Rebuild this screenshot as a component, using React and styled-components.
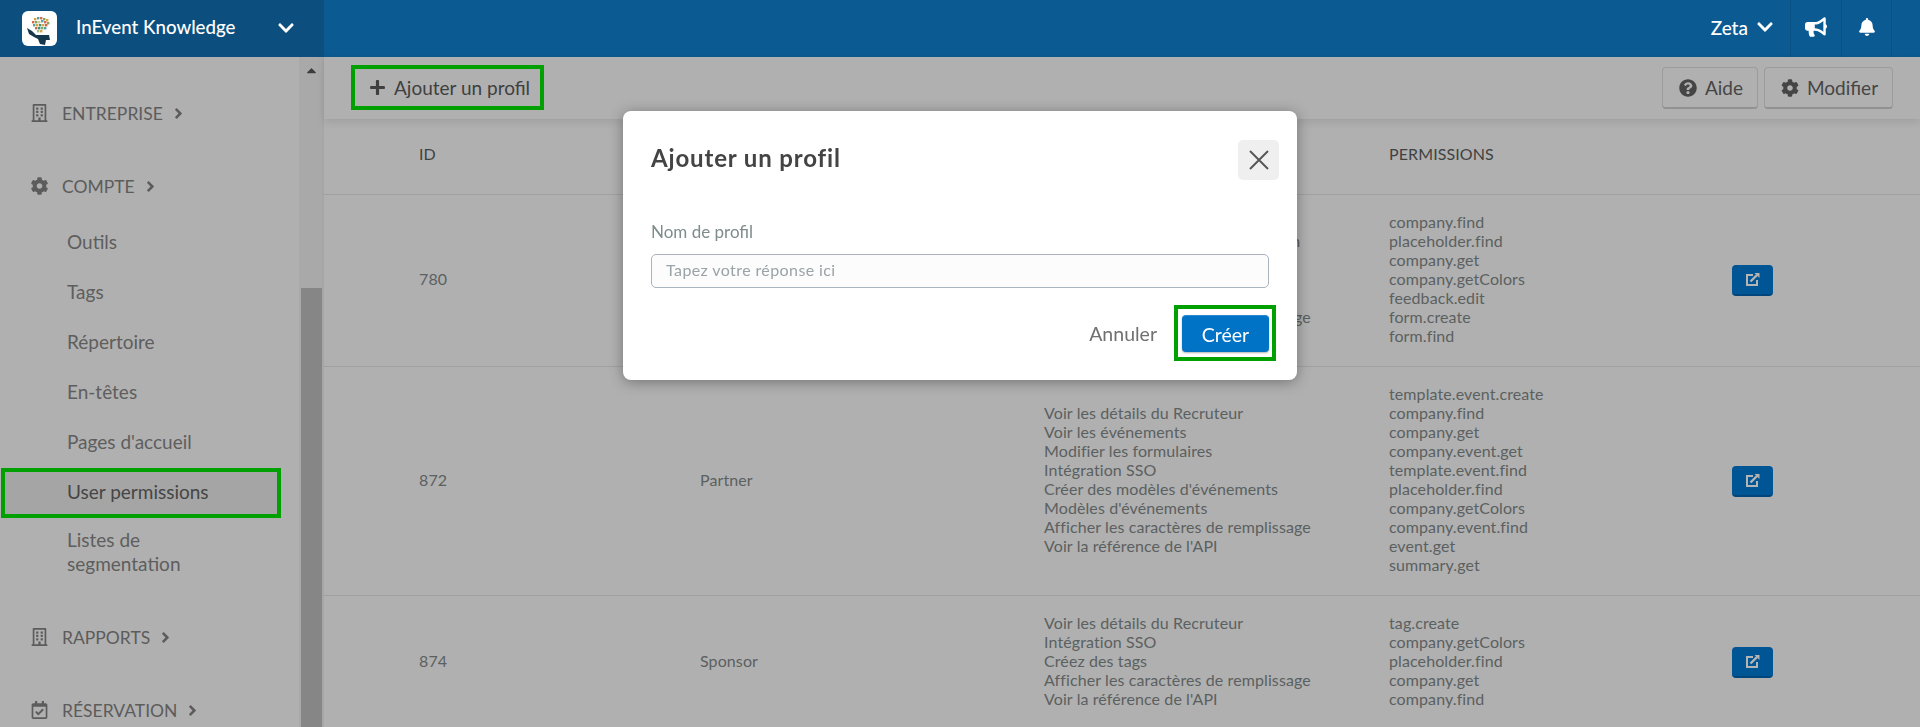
import React from 'react';
import styled, { createGlobalStyle } from 'styled-components';
import {
    FaRegBuilding,
    FaCog,
    FaRegCalendarCheck,
    FaPlus,
    FaQuestionCircle,
    FaBullhorn,
    FaBell,
    FaChevronDown,
    FaAngleRight,
    FaCaretUp,
} from 'react-icons/fa';

const GlobalStyle = createGlobalStyle`
    html, body {
        margin: 0;
        height: 100%;
        overflow: hidden;
        background: #b0b0b0;
    }
    * { box-sizing: border-box; }
    body { font-family: Lato, "Liberation Sans", sans-serif; }
`;

const rows = [
    {
        id: '780',
        name: '',
        labels: [
            "Voir les détails du Recruteur",
            "Voir les paramètres de l'organisation",
            "Intégration SSO",
            "Créez des tags",
            "Voir les événements",
            "Afficher les caractères de remplissage",
            "Voir la référence de l'API",
        ],
        permissions: ['company.find', 'placeholder.find', 'company.get', 'company.getColors', 'feedback.edit', 'form.create', 'form.find'],
    },
    {
        id: '872',
        name: 'Partner',
        labels: [
            "Voir les détails du Recruteur",
            "Voir les événements",
            "Modifier les formulaires",
            "Intégration SSO",
            "Créer des modèles d'événements",
            "Modèles d'événements",
            "Afficher les caractères de remplissage",
            "Voir la référence de l'API",
        ],
        permissions: ['template.event.create', 'company.find', 'company.get', 'company.event.get', 'template.event.find', 'placeholder.find', 'company.getColors', 'company.event.find', 'event.get', 'summary.get'],
    },
    {
        id: '874',
        name: 'Sponsor',
        labels: [
            "Voir les détails du Recruteur",
            "Intégration SSO",
            "Créez des tags",
            "Afficher les caractères de remplissage",
            "Voir la référence de l'API",
        ],
        permissions: ['tag.create', 'company.getColors', 'placeholder.find', 'company.get', 'company.find'],
    },
];

const compteItems = ['Outils', 'Tags', 'Répertoire', 'En-têtes', "Pages d'accueil", 'User permissions'];

const logoDots = [
    [12, 7, '#d9a441'], [15, 6, '#4fa3a5'], [18, 6, '#d9694a'], [21, 7, '#7aa95c'], [24, 8, '#d9a441'],
    [10, 10, '#d9694a'], [13, 10, '#7aa95c'], [16, 10, '#c9c9a0'], [19, 9, '#4fa3a5'], [22, 10, '#d9694a'], [25, 11, '#7aa95c'],
    [11, 13, '#4fa3a5'], [14, 13, '#d9a441'], [17, 13, '#3f8f7f'], [20, 13, '#d9a441'], [23, 13, '#c9694a'],
    [13, 16, '#c9694a'], [16, 16, '#3f8f7f'], [19, 16, '#7aa95c'], [22, 16, '#4fa3a5'],
    [15, 19, '#9bbf8a'], [18, 19, '#d9a441'],
];

const Page = styled.div`
    width: 1920px;
    height: 727px;
    display: flex;
    flex-direction: column;
    overflow: hidden;
`;

const Header = styled.header`
    flex: 0 0 57px;
    display: flex;
    background: #0c5a92;
    color: #fff;
`;

const Brand = styled.div`
    width: 324px;
    background: #0c4f7f;
    display: flex;
    align-items: center;
    padding-left: 22px;
`;

const Logo = styled.svg`
    width: 35px;
    height: 35px;
    flex: none;
`;

const BrandName = styled.span`
    margin: 0 0 3px 19px;
    font-size: 18.7px;
    font-weight: 500;
    width: 201px;
`;

const BrandChevron = styled(FaChevronDown)`
    margin-bottom: 2px;
`;

const HeaderRight = styled.div`
    margin-left: auto;
    display: flex;
    align-items: stretch;
    margin-right: 28px;
`;

const UserMenu = styled.div`
    display: flex;
    align-items: center;
    gap: 8px;
    font-size: 19px;
    font-weight: 500;
    padding: 0 16px 3px 0;
`;

const HeaderIcon = styled.div`
    width: 51px;
    padding-bottom: 3px;
    display: flex;
    align-items: center;
    justify-content: center;
    font-size: 20px;
    border-left: 1px solid #0b5184;
    &:last-child { border-right: 1px solid #0b5184; }
`;

const Body = styled.div`
    flex: 1;
    display: flex;
    min-height: 0;
`;

const Sidebar = styled.aside`
    width: 324px;
    flex: none;
    display: flex;
    background: #b0b0b0;
    border-right: 2px solid #a6a6a6;
`;

const Nav = styled.nav`
    width: 300px;
    padding: 41px 0 0 1px;
    flex: none;
`;

const NavHead = styled.div`
    height: 30px;
    margin: 0 0 43px 27px;
    display: flex;
    align-items: center;
    color: #5c5c5c;
    font-size: 17.5px;
    & > svg:first-child {
        font-size: 18px;
        width: 23px;
        margin-right: 11px;
        flex: none;
    }
`;

const NavArrow = styled(FaAngleRight)`
    margin-left: 7px;
    font-size: 17px;
`;

const NavList = styled.div`
    margin: -26px 0 34px;
`;

const NavItem = styled.div`
    width: 280px;
    height: ${(p) => (p.$tall ? '70px' : '50px')};
    padding: 0 0 3px 62px;
    display: flex;
    align-items: center;
    line-height: 24px;
    font-size: 19px;
    color: ${(p) => (p.$active ? '#454545' : '#5e5e5e')};
    background: ${(p) => (p.$active ? '#a5a5a5' : 'transparent')};
    border: 4px solid ${(p) => (p.$active ? '#00a000' : 'transparent')};
`;

const ScrollTrack = styled.div`
    width: 23px;
    margin-left: -1px;
    padding-left: 2px;
    background: #a9a9a9;
    display: flex;
    flex-direction: column;
    align-items: center;
`;

const ScrollArrow = styled(FaCaretUp)`
    color: #3c3c3c;
    font-size: 15px;
    margin-top: 6px;
`;

const ScrollThumb = styled.div`
    width: 100%;
    margin-top: auto;
    height: 439px;
    background: #868686;
`;

const Main = styled.main`
    flex: 1;
    min-width: 0;
    display: flex;
    flex-direction: column;
`;

const Toolbar = styled.div`
    flex: 0 0 62px;
    display: flex;
    align-items: flex-start;
    padding: 8px 27px 0 27px;
    background: #b0b0b0;
    box-shadow: 0 3px 8px rgba(0, 0, 0, 0.1);
    position: relative;
`;

const AddProfile = styled.div`
    width: 193px;
    height: 45px;
    display: flex;
    align-items: center;
    gap: 8px;
    padding-left: 14px;
    border: 4px solid #00a000;
    font-size: 19px;
    color: #3f3f3f;
`;

const ToolbarActions = styled.div`
    margin-left: auto;
    display: flex;
    gap: 6px;
    margin-top: 2px;
`;

const ToolButton = styled.div`
    height: 42px;
    width: ${(p) => p.$width}px;
    padding-left: 2px;
    display: flex;
    align-items: center;
    justify-content: center;
    gap: 8px;
    font-size: 19px;
    color: #454545;
    background: #b0b0b0;
    border: 1px solid #9b9b9b;
    border-bottom: 2px solid #919191;
    border-radius: 4px;
`;

const TableRow = styled.div`
    display: grid;
    grid-template-columns: 281px 344px 345px 343px 1fr;
    padding: 0 0 4px 95px;
    align-items: center;
    height: ${(p) => p.$height}px;
    flex: none;
    font-size: 16px;
    letter-spacing: 0.1px;
    color: #5b6060;
    border-bottom: 1px solid #a0a0a0;
`;

const HeadRow = styled(TableRow)`
    color: #3f4242;
    padding-bottom: 6px;
`;

const Lines = styled.div`
    line-height: 19px;
`;

const EditButton = styled.div`
    width: 41px;
    height: 31px;
    margin-top: 4px;
    background: #005595;
    border-radius: 4px;
    border-bottom: 2px solid #00467c;
    display: flex;
    align-items: center;
    justify-content: center;
`;

const Backdrop = styled.div`
    position: fixed;
    inset: 0;
    padding-top: 111px;
    display: flex;
    justify-content: center;
    align-items: flex-start;
`;

const Modal = styled.div`
    width: 674px;
    height: 269px;
    background: #fff;
    border-radius: 8px;
    padding: 29px 18px 0 28px;
    box-shadow: 0 2px 14px rgba(0, 0, 0, 0.35);
`;

const ModalHead = styled.div`
    display: flex;
    justify-content: space-between;
    align-items: flex-start;
`;

const ModalTitle = styled.h2`
    margin: 0;
    padding-top: 3px;
    font-size: 24px;
    line-height: 30px;
    font-weight: 700;
    letter-spacing: 0.85px;
    color: #444;
`;

const CloseButton = styled.div`
    width: 41px;
    height: 40px;
    background: #efefef;
    border-radius: 5px;
    display: flex;
    align-items: center;
    justify-content: center;
`;

const FieldLabel = styled.label`
    display: block;
    margin-top: 41px;
    font-size: 17px;
    line-height: 22px;
    color: #7f8c8d;
`;

const TextInput = styled.input`
    display: block;
    width: 618px;
    height: 34px;
    margin-top: 11px;
    padding: 0 13px 3px 14px;
    font: 16px Lato, "Liberation Sans", sans-serif;
    letter-spacing: 0.4px;
    background: #fcfcfc;
    border: 1px solid #a9b4bf;
    border-radius: 5px;
    &::placeholder { color: #9aa3a6; opacity: 1; }
`;

const ModalFooter = styled.div`
    display: flex;
    justify-content: flex-end;
    align-items: center;
    margin: 17px 3px 0 0;
    gap: 17px;
`;

const CancelLink = styled.span`
    font-size: 19.5px;
    color: #707070;
`;

const CreateFrame = styled.div`
    width: 102px;
    height: 56px;
    border: 4px solid #00a000;
    padding: 6px 3px 0 4px;
`;

const CreateButton = styled.div`
    width: 87px;
    height: 37px;
    border-radius: 4px;
    background: #0073c7;
    border-top: 1px solid #2a8ad2;
    color: #fff;
    font-size: 19.5px;
    display: flex;
    align-items: center;
    justify-content: center;
    box-shadow: 0 1px 2px rgba(0, 0, 0, 0.3);
`;

const CompanyLogo = () => (
    <Logo viewBox="0 0 35 35">
        <rect width="35" height="35" rx="6" fill="#fff" />
        {logoDots.map(([x, y, c]) => (
            <rect key={`${x}-${y}`} x={x} y={y} width="2.4" height="2.4" fill={c} />
        ))}
        <path d="M5 17l5 3 4 4h13l1 5-4 0-1 5-5-1-2-5-4-2-5-3z" fill="#16384d" />
    </Logo>
);

const EditIcon = () => (
    <svg width="15" height="15" viewBox="0 0 15 15" fill="none" stroke="#b4b4b4">
        <path d="M8 3H2v10h10V8" strokeWidth="2" />
        <path d="M5.5 9.5L12 3" strokeWidth="2.4" />
        <path d="M9.5 1H14.5V6z" fill="#b4b4b4" stroke="none" />
    </svg>
);

const App = () => {
    return (
        <Page>
            <GlobalStyle />
            <Header>
                <Brand>
                    <CompanyLogo />
                    <BrandName>InEvent Knowledge</BrandName>
                    <BrandChevron size={18} />
                </Brand>
                <HeaderRight>
                    <UserMenu>
                        Zeta <FaChevronDown size={18} />
                    </UserMenu>
                    <HeaderIcon><FaBullhorn size={22} /></HeaderIcon>
                    <HeaderIcon><FaBell size={18} /></HeaderIcon>
                </HeaderRight>
            </Header>
            <Body>
                <Sidebar>
                    <Nav>
                        <NavHead><FaRegBuilding />ENTREPRISE<NavArrow /></NavHead>
                        <NavHead><FaCog />COMPTE<NavArrow /></NavHead>
                        <NavList>
                            {compteItems.map((item) => (
                                <NavItem key={item} $active={item === 'User permissions'}>{item}</NavItem>
                            ))}
                            <NavItem $tall><span>Listes de<br />segmentation</span></NavItem>
                        </NavList>
                        <NavHead><FaRegBuilding />RAPPORTS<NavArrow /></NavHead>
                        <NavHead><FaRegCalendarCheck />RÉSERVATION<NavArrow /></NavHead>
                    </Nav>
                    <ScrollTrack>
                        <ScrollArrow />
                        <ScrollThumb />
                    </ScrollTrack>
                </Sidebar>
                <Main>
                    <Toolbar>
                        <AddProfile><FaPlus size={17} />Ajouter un profil</AddProfile>
                        <ToolbarActions>
                            <ToolButton $width={96}><FaQuestionCircle size={18} />Aide</ToolButton>
                            <ToolButton $width={129}><FaCog size={18} />Modifier</ToolButton>
                        </ToolbarActions>
                    </Toolbar>
                    <HeadRow $height={76}>
                        <div>ID</div>
                        <div />
                        <div />
                        <div>PERMISSIONS</div>
                    </HeadRow>
                    {rows.map((row, i) => (
                        <TableRow key={row.id} $height={[172, 229, 133][i]}>
                            <div>{row.id}</div>
                            <div>{row.name}</div>
                            <Lines>{row.labels.map((l) => <div key={l}>{l}</div>)}</Lines>
                            <Lines>{row.permissions.map((p) => <div key={p}>{p}</div>)}</Lines>
                            <EditButton><EditIcon /></EditButton>
                        </TableRow>
                    ))}
                </Main>
            </Body>
            <Backdrop>
                <Modal>
                    <ModalHead>
                        <ModalTitle>Ajouter un profil</ModalTitle>
                        <CloseButton>
                            <svg width="22" height="22" viewBox="0 0 22 22" stroke="#555" strokeWidth="1.9">
                                <path d="M2 2l18 18M20 2L2 20" />
                            </svg>
                        </CloseButton>
                    </ModalHead>
                    <FieldLabel>Nom de profil</FieldLabel>
                    <TextInput placeholder="Tapez votre réponse ici" />
                    <ModalFooter>
                        <CancelLink>Annuler</CancelLink>
                        <CreateFrame><CreateButton>Créer</CreateButton></CreateFrame>
                    </ModalFooter>
                </Modal>
            </Backdrop>
        </Page>
    );
};

export default App;
